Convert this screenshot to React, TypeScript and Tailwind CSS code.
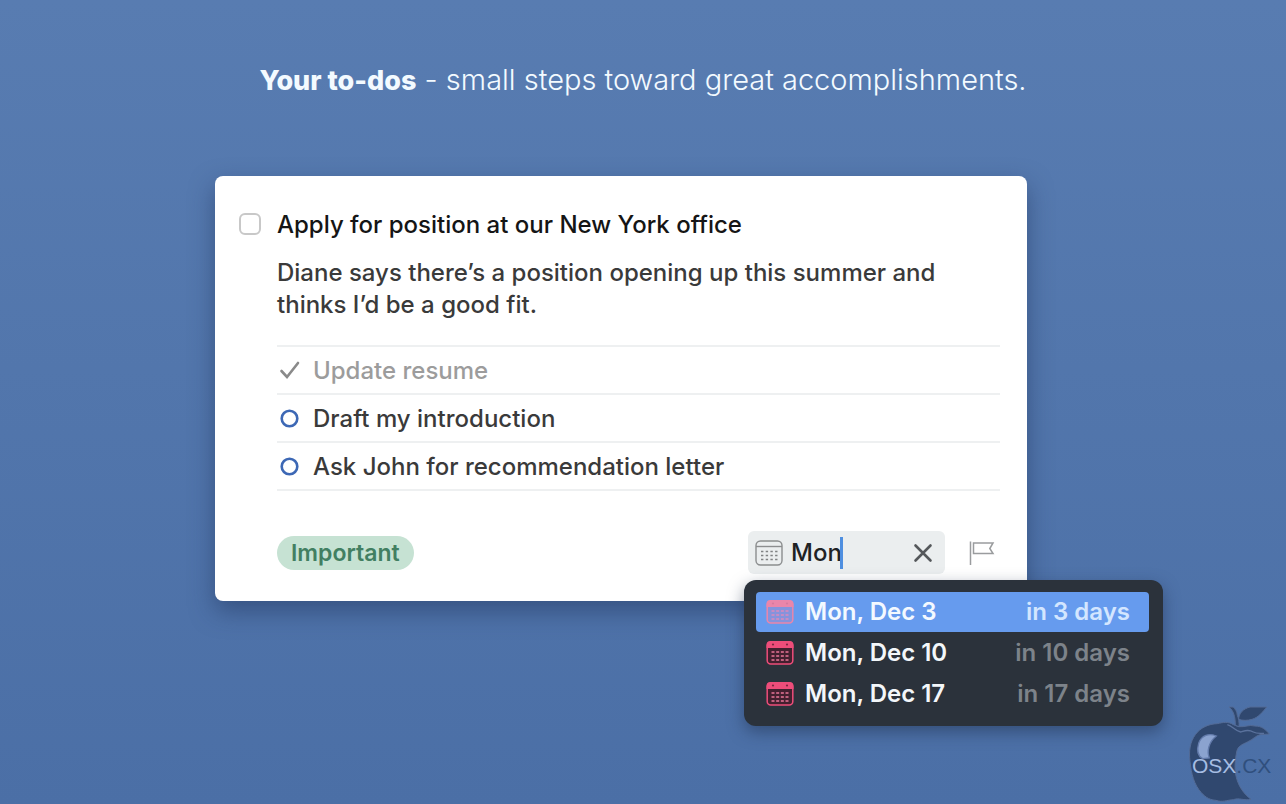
import { useState } from "react";

function CalendarOutline() {
  return (
    <svg viewBox="0 0 28 26" className="h-[26px] w-7 shrink-0" fill="none" stroke="#8c8e8f" strokeWidth="1.4" aria-hidden="true">
      <rect x="1" y="1" width="26" height="24" rx="4.5" />
      <path d="M1 6.500h26" />
      <path d="M6 11.500h17M6 15.500h17M6 19.500h17" stroke="#818384" strokeWidth="1.700" strokeDasharray="2.400 2.300" />
    </svg>
  );
}

function CalendarSolid({ active }: { active: boolean }) {
  const main = active ? "#ea86aa" : "#ee4d7a";
  const dots = active ? "#c58cc4" : "#c0607e";
  const body = active ? "#8593dc" : "#43202f";
  const holes = active ? "#d67a9e" : "#7c2742";
  return (
    <svg viewBox="0 0 28 26" className="h-[26px] w-7 shrink-0" fill="none" aria-hidden="true">
      <rect x="1.200" y="2" width="25.600" height="22" rx="3.500" fill={body} stroke={main} strokeWidth="1.500" />
      <path d="M.500 8V5a4 4 0 0 1 4-4h19a4 4 0 0 1 4 4v3z" fill={main} />
      <path d="M5.500 12h17M5.500 16h17M5.500 20h17" stroke={dots} strokeWidth="1.800" strokeDasharray="3 1.670" />
      <circle cx="7" cy="4.500" r="1.100" fill={holes} />
      <circle cx="21" cy="4.500" r="1.100" fill={holes} />
    </svg>
  );
}

function Watermark() {
  return (
    <div className="absolute right-0 bottom-0 h-[114px] w-[116px]">
      <svg viewBox="0 0 348 342" className="h-full w-full" aria-hidden="true">
        <g fill="#30486f" stroke="#536b96" strokeWidth="3" strokeLinejoin="round">
          <path d="M190 104C176 94 158 97 142 101C116 102 92 112 76 134C60 156 56 184 60 214C64 252 72 284 94 308C108 324 122 330 138 331C156 338 172 330 190 329C208 322 222 333 243 328C222 312 206 290 199 262C192 234 196 208 200 186C203 168 216 164 232 156C250 148 256 138 270 134L298 132C286 118 276 108 254 108C236 103 226 112 206 110Z" />
          <path d="M177 51C190 62 196 78 196 106L207 110C208 96 206 86 202 76C201 64 196 58 190 51Z" />
          <path d="M206 88C206 70 220 56 240 51L290 51C278 66 266 82 246 88C232 92 218 92 206 88Z" />
        </g>
        <path d="M172 104C188 108 196 124 212 126C226 122 236 118 250 126C260 132 270 130 282 130" fill="none" stroke="#5a729d" strokeWidth="4" />
        <path d="M139 138C118 128 94 136 86 160C80 180 84 198 98 206L118 204C110 184 116 156 139 138Z" fill="#8ba3cf" stroke="#637bab" strokeWidth="4" />
      </svg>
      <p className="absolute top-[62px] left-[22px] font-['Liberation_Sans',sans-serif] text-[21px] leading-7 text-[#a6bde3]">
        OSX<span className="text-[#304f7d]">.CX</span>
      </p>
    </div>
  );
}

const steps = [
  { label: "Update resume", done: true },
  { label: "Draft my introduction", done: false },
  { label: "Ask John for recommendation letter", done: false },
];

const dates = [
  { day: "Mon, Dec 3", distance: "in 3 days" },
  { day: "Mon, Dec 10", distance: "in 10 days" },
  { day: "Mon, Dec 17", distance: "in 17 days" },
];

export default function App() {
  const [query, setQuery] = useState("Mon");
  const [selected, setSelected] = useState(0);

  return (
    <main className="relative flex min-h-screen flex-col items-center overflow-hidden bg-linear-to-b from-[#587cb1] to-[#4b6fa6] px-6 pt-[60px] font-[Inter,sans-serif]">
      <h1 className="text-center text-[29px] leading-10 font-light text-[#f3faff]">
        <strong className="text-[27px] font-extrabold">Your to-dos</strong> - small steps toward great accomplishments.
      </h1>

      <div className="mt-[75px] flex w-full justify-center pr-11">
        <article className="w-full max-w-[812px] rounded-lg bg-white pt-[31px] pr-[27px] pb-[27px] pl-6 text-2xl shadow-[0_10px_24px_rgba(30,50,90,0.5)]">
          <div className="flex items-center gap-4">
            <input id="todo" type="checkbox" className="size-[22px] shrink-0 appearance-none rounded-[6px] border-2 border-[#c8c8c8] bg-white" />
            <label htmlFor="todo" className="pt-0.5 leading-8 font-medium text-[#151515]">
              Apply for position at our New York office
            </label>
          </div>

          <div className="pl-[38px]">
            <p className="mt-4 leading-8 font-[450] text-[#3a3a3a]">
              Diane says there’s a position opening up this summer and thinks I’d be a good fit.
            </p>

            <ul className="mt-6 border-b-2 border-[#eef0f1]">
              {steps.map((step) => (
                <li key={step.label} className="flex h-12 items-center gap-3 border-t-2 border-[#eef0f1]">
                  {step.done ? (
                    <svg viewBox="0 0 24 24" className="size-6" fill="none" stroke="#8a8a8a" strokeWidth="2.600" strokeLinecap="round" aria-hidden="true">
                      <path d="M4.500 13l5.500 6L21 5" />
                    </svg>
                  ) : (
                    <svg viewBox="0 0 24 24" className="size-6" fill="none" stroke="#3d68b5" strokeWidth="2.600" aria-hidden="true">
                      <circle cx="12.500" cy="12.500" r="7.800" />
                    </svg>
                  )}
                  <span className={step.done ? "pt-0.5 font-[450] text-[#9c9c9c]" : "pt-0.5 font-[450] text-[#3a3a3a]"}>{step.label}</span>
                </li>
              ))}
            </ul>

            <div className="mt-10 flex items-center justify-between">
              <span className="rounded-full bg-[#c6e2d3] px-[14px] text-[23px] leading-[34px] font-semibold text-[#427f62]">Important</span>

              <div className="flex items-center gap-6 pr-[5px]">
                <div className="relative">
                  <div className="flex h-[43px] w-[197px] items-center rounded-md bg-[#ebeeef] pr-2 pl-[7px]">
                    <CalendarOutline />
                    <div className="relative ml-2 flex-1">
                      <input
                        aria-label="Date"
                        value={query}
                        onChange={(event) => setQuery(event.target.value)}
                        className="block w-full min-w-0 bg-transparent leading-8 font-medium text-[#202224] caret-[#4f8fe0] outline-none"
                      />
                      {query === "Mon" && <span className="absolute top-0 left-[49px] h-8 w-[3px] bg-[#4f8fe0]" />}
                    </div>
                    <button type="button" aria-label="Clear date" onClick={() => setQuery("")} className="flex size-7 items-center justify-center">
                      <svg viewBox="0 0 24 24" className="size-6" fill="none" stroke="#55585b" strokeWidth="2.600" strokeLinecap="round">
                        <path d="M4.500 4.500l15 15M19.500 4.500l-15 15" />
                      </svg>
                    </button>
                  </div>

                  <div className="absolute top-[49px] -left-1 z-10 w-[419px] rounded-xl bg-[#2b323b] p-3 pr-[14px] shadow-[0_6px_16px_rgba(30,45,75,0.5)]">
                    <ul className="flex flex-col gap-px">
                      {dates.map((date, index) => (
                        <li key={date.day}>
                          <button
                            type="button"
                            onClick={() => setSelected(index)}
                            className={
                              index === selected
                                ? "flex h-10 w-full items-center rounded-sm bg-[#669bee] pr-[19px] pl-[10px] font-semibold text-[#f3f9ff]"
                                : "flex h-10 w-full items-center rounded-sm pr-[19px] pl-[10px] font-semibold text-[#f3f7fa]"
                            }
                          >
                            <CalendarSolid active={index === selected} />
                            <span className="ml-[11px]">{date.day}</span>
                            <span className={index === selected ? "ml-auto text-[#d3e6ff]" : "ml-auto text-[#7d838a]"}>{date.distance}</span>
                          </button>
                        </li>
                      ))}
                    </ul>
                  </div>
                </div>

                <button type="button" aria-label="Add deadline" className="flex">
                  <svg viewBox="0 0 26 26" className="size-[26px]" fill="none" stroke="#9a9c9e" strokeWidth="1.500">
                    <path d="M1.500 1.500V25M4.500 3H24l-3.200 5.500L24 13.500H4.500z" />
                  </svg>
                </button>
              </div>
            </div>
          </div>
        </article>
      </div>

      <Watermark />
    </main>
  );
}
